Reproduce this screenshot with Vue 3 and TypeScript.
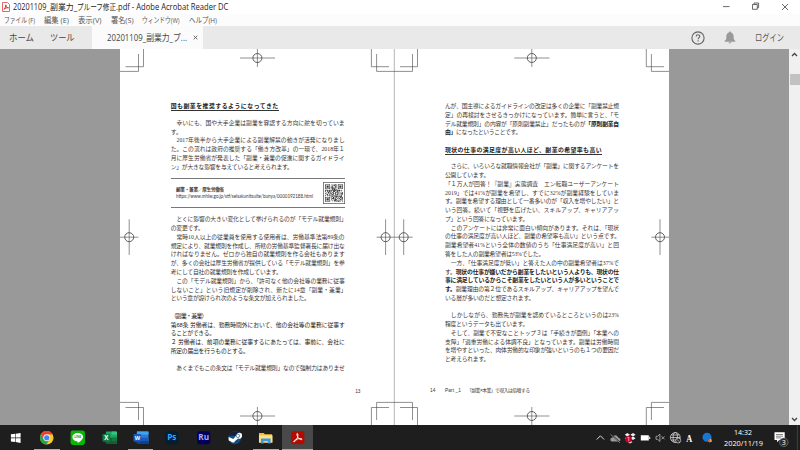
<script setup lang="ts">
import type { Directive } from 'vue'

type Line = { t: string; w?: number; g?: boolean }

// Fits a run of text to a measure: by tracking, or by horizontal scaling with `.scale`.
const vFit: Directive<HTMLElement, number | undefined> = {
  mounted(el, { value, modifiers }) {
    if (!value) return
    const natural = el.getBoundingClientRect().width
    if (modifiers.scale) {
      el.style.transform = `scaleX(${value / natural})`
      el.style.marginRight = `${value - natural}px`
    } else {
      const n = Array.from(el.textContent ?? '').length
      el.style.letterSpacing = `${(value - natural) / n}px`
    }
  },
}

const F = 174
const leftIntro: Line[] = [
  { t: '　幸いにも、国や大手企業は副業を容認する方向に舵を切っていま', w: F },
  { t: 'す。' },
  { t: '　2017年後半から大手企業による副業解禁の動きが活発になりまし', w: F },
  { t: 'た。この流れは政府の推奨する「働き方改革」の一環で、2018年１', w: F },
  { t: '月に厚生労働省が発表した「副業・兼業の促進に関するガイドライ', w: F },
  { t: 'ン」が大きな影響を与えていると考えられます。', w: 122 },
]
const leftBody: Line[] = [
  { t: '　とくに影響の大きい変化として挙げられるのが「モデル就業規則」', w: F + 2 },
  { t: 'の変更です。', w: 33 },
  { t: '　常時10人以上の従業員を使用する使用者は、労働基準法第89条の', w: F },
  { t: '規定により、就業規則を作成し、所轄の労働基準監督署長に届け出な', w: F },
  { t: 'ければなりません。ゼロから独自の就業規則を作る会社もあります', w: F },
  { t: 'が、多くの会社は厚生労働省が提供している「モデル就業規則」を参', w: F },
  { t: '考にして自社の就業規則を作成しています。', w: 111 },
  { t: '　この「モデル就業規則」から、「許可なく他の会社等の業務に従事', w: F },
  { t: 'しないこと」という旧規定が削除され、新たに14章「副業・兼業」', w: F + 2 },
  { t: 'という章が設けられ次のような条文が加えられました。', w: 139 },
  { t: '' },
  { t: '（副業・兼業）', w: 36, g: true },
  { t: '第68条 労働者は、勤務時間外において、他の会社等の業務に従事す', w: F, g: true },
  { t: 'ることができる。', w: 44, g: true },
  { t: '２ 労働者は、前項の業務に従事するにあたっては、事前に、会社に', w: F, g: true },
  { t: '所定の届出を行うものとする。', w: 78, g: true },
  { t: '' },
  { t: '　あくまでもこの条文は「モデル就業規則」なので強制力はありませ', w: F },
]
const rightIntro: Line[] = [
  { t: 'んが、国主導によるガイドラインの改定は多くの企業に「副業禁止規', w: F },
  { t: '定」の再検討をさせるきっかけになっています。簡単に言うと、「モ', w: F },
  { t: 'デル就業規則」の内容が「原則副業禁止」だったものが<b>「原則副業自</b>', w: F },
  { t: '<b>由」</b>になったということです。', w: 76 },
]
const rightBody: Line[] = [
  { t: '　さらに、いろいろな就職情報会社が「副業」に関するアンケートを', w: F },
  { t: '公開しています。', w: 44 },
  { t: '「１万人が回答！『副業』実態調査　エン転職ユーザーアンケート', w: F },
  { t: '2019」では41%が副業を希望し、すでに32%が副業経験をしていま', w: F },
  { t: 'す。副業を希望する理由として一番多いのが「収入を増やしたい」と', w: F },
  { t: 'いう回答。続いて「視野を広げたい、スキルアップ、キャリアアッ', w: F },
  { t: 'プ」という回答になっています。', w: 83 },
  { t: '　このアンケートには非常に面白い傾向があります。それは、「現状', w: F },
  { t: 'の仕事の満足度が高い人ほど、副業の希望率も高い」という点です。', w: F + 1 },
  { t: '副業希望者41%という全体の数値のうち「仕事満足度が高い」と回', w: F },
  { t: '答をした人の副業希望者は53%でした。', w: 99 },
  { t: '　一方、「仕事満足度が低い」と答えた人の中の副業希望者は37%で', w: F },
  { t: 'す。<b>現状の仕事が嫌いだから副業をしたいという人よりも、現状の仕</b>', w: F },
  { t: '<b>事に満足しているからこそ副業をしたいという人が多いということで</b>', w: F },
  { t: '<b>す。</b>副業理由の第２位であるスキルアップ、キャリアアップを望んで', w: F },
  { t: 'いる層が多いのだと想定されます。', w: 89 },
  { t: '' },
  { t: '　しかしながら、勤務先が副業を認めているところというのは23%', w: F },
  { t: '程度というデータも出ています。', w: 83 },
  { t: '　そして、副業で不安なことトップ３は「手続きが面倒」「本業への', w: F },
  { t: '支障」「過重労働による体調不良」となっています。副業は労働時間', w: F },
  { t: 'を増やすといった、肉体労働的な印象が強いというのも１つの要因だ', w: F },
  { t: 'と考えられます。', w: 44 },
]

const titleRuns = [
  { t: '20201109_', w: 36.5 },
  { t: '副業力_', w: 27.2 },
  { t: 'プルーフ修正', w: 39 },
  { t: '.pdf - Adobe Acrobat Reader DC', w: 112.3 },
]

const menus = [
  { t: 'ファイル (F)', w: 31 },
  { t: '編集 (E)', w: 25 },
  { t: '表示(V)', w: 23.5 },
  { t: '署名(S)', w: 22.5 },
  { t: 'ウィンドウ(W)', w: 37.5 },
  { t: 'ヘルプ(H)', w: 28 },
]

// Trim marks at each page corner.
const corners = [
  'M143.5 49V66.7H125.5M138.5 54V71.4H120',
  'M371.4 49V66.7H389M376.6 54V71.4H394',
  'M417.5 49V66.7H400M412.5 54V71.4H394',
  'M646.3 49V66.7H664M651.4 54V71.4H669',
  'M143.5 425V407.5H125.5M138.5 420V402.4H120',
  'M371.4 425V407.5H389M376.6 420V402.4H394',
  'M417.5 425V407.5H400M412.5 420V402.4H394',
  'M646.3 425V407.5H664M651.4 420V402.4H669',
]
const targets = [
  { x: 257.4, y: 58, l: 240, r: 275, t: 49, b: 67 },
  { x: 531.8, y: 58, l: 514.3, r: 549.5, t: 49, b: 67 },
  { x: 257.4, y: 416, l: 240, r: 275, t: 407, b: 425 },
  { x: 531.8, y: 416, l: 514.3, r: 549.5, t: 407, b: 425 },
  { x: 129.2, y: 237.2, l: 120, r: 138.5, t: 219.3, b: 255 },
  { x: 385.6, y: 237.2, l: 376.6, r: 394, t: 219.3, b: 255 },
  { x: 403.7, y: 237.2, l: 394, r: 412.7, t: 219.3, b: 255 },
  { x: 660, y: 237.2, l: 651.4, r: 669, t: 219.3, b: 255 },
]

const N = 25
let qr = ''
let seed = 77
for (let y = 0; y < N; y++) {
  for (let x = 0; x < N; x++) {
    seed = (seed * 1103515245 + 12345) % 2147483648
    const fx = x < 8 ? x : x > N - 9 ? N - 1 - x : -1
    const fy = y < 8 ? y : y > N - 9 ? N - 1 - y : -1
    let on = (seed >> 12) % 2 === 0
    if (fx >= 0 && fy >= 0 && !(x > 8 && y > 8)) {
      const d = Math.max(Math.abs(fx - 3), Math.abs(fy - 3))
      on = d === 3 || d < 2
    }
    if (on) qr += `M${x} ${y}h1v1h-1z`
  }
}
</script>

<template>
  <div class="screen">
    <header class="title">
      <svg class="pdf" viewBox="0 0 8 10"><path d="M.5.5h5l2 2v7h-7z" fill="#fff" stroke="#d44" stroke-width=".8"/><path d="M1.8 7.3C3.2 6.2 4 4.2 3.8 2.7M3.8 3C4 5 5.2 6 6.5 5.8M2 7.2C3.4 6 5 5.5 6.5 5.8" fill="none" stroke="#c22" stroke-width=".9"/></svg>
      <span class="title-text"><span v-for="r in titleRuns" :key="r.t"><span v-fit.scale="r.w" class="fit">{{ r.t }}</span></span></span>
      <svg class="winbtns" viewBox="720 0 80 14" fill="none" stroke="#444" stroke-width=".8"><path d="M723 6.6h6.5M752.5 4.5h4.8v4.800h-4.800zM754 4.400V3h4.600v4.700h-1.200M782 4l6 6M788 4l-6 6"/></svg>
    </header>
    <nav class="menu">
      <span v-for="m in menus" :key="m.t"><span v-fit.scale="m.w" class="fit">{{ m.t }}</span></span>
    </nav>
    <div class="toolbar">
      <div class="nav-tabs"><span><span v-fit.scale="25" class="fit">ホーム</span></span><span><span v-fit.scale="24.5" class="fit">ツール</span></span></div>
      <div class="tab"><span><span v-fit.scale="80" class="fit">20201109_副業力_プ...</span></span><svg viewBox="0 0 5 5"><path d="M.7.7l3.6 3.6M4.3.7L.7 4.3" stroke="#555" stroke-width=".9"/></svg></div>
      <div class="account">
        <svg class="help" viewBox="0 0 14 14"><circle cx="7" cy="7" r="6.1" fill="none" stroke="#626262" stroke-width="1.1"/><path d="M5.2 5.6C5.2 3.1 8.9 3.2 8.8 5.4C8.7 6.7 7.1 6.7 7.1 8.2M7.1 9.2v1.2" fill="none" stroke="#626262" stroke-width="1.1"/></svg>
        <svg class="bell" viewBox="0 0 12 13"><path d="M6 .6c.7 0 1 .5 1 1C9 2.1 9.7 4 9.7 6v2l1.6 2v.7H.7V10l1.6-2V6c0-2 .7-3.900 2.700-4.400 0-.5.3-1 1-1zM4.500 11.300h3c-.2 1.500-2.800 1.500-3 0z" fill="#999"/></svg>
        <span class="login"><span v-fit.scale="29" class="fit">ログイン</span></span>
      </div>
    </div>

    <main class="doc">
      <div class="spread">
        <article class="page left">
          <h2><span v-fit="108">国も副業を推奨するようになってきた</span></h2>
          <p v-for="(l, i) in leftIntro" :key="i"><span v-fit="l.w" v-html="l.t"></span></p>
          <aside class="ref">
            <div class="ref-text"><strong><span v-fit="48">副業・兼業／厚生労働省</span></strong><span class="url"><span v-fit.scale="137" class="fit">https://www.mhlw.go.jp/stf/seisakunitsuite/bunya/0000192188.html</span></span></div>
            <svg class="qr" viewBox="-3 -3 31 31"><rect x="-2.500" y="-2.500" width="30" height="30" fill="#fff" stroke="#555" stroke-width="1"/><path :d="qr" fill="#333"/></svg>
          </aside>
          <p v-for="(l, i) in leftBody" :key="'b' + i" :class="{ gothic: l.g }"><span v-fit="l.w" v-html="l.t"></span></p>
          <footer class="folio-left">13</footer>
        </article>
        <article class="page right">
          <p v-for="(l, i) in rightIntro" :key="i"><span v-fit="l.w" v-html="l.t"></span></p>
          <h2><span v-fit="157">現状の仕事の満足度が高い人ほど、副業の希望率も高い</span></h2>
          <p v-for="(l, i) in rightBody" :key="'b' + i"><span v-fit="l.w" v-html="l.t"></span></p>
          <footer class="folio-right"><span class="num">14</span><span class="part"><span v-fit="16">Part _1</span></span><span><span v-fit="62.5">「副業×本業」で収入は倍増する</span></span></footer>
        </article>
        <svg class="marks" viewBox="120 49 549 376" fill="none" stroke="#444" stroke-width=".6">
          <path d="M394.300 49V425" stroke="#b5b5b5" stroke-width="1"/>
          <path v-for="c in corners" :key="c" :d="c"/>
          <g v-for="(t, i) in targets" :key="i"><circle :cx="t.x" :cy="t.y" r="4.500" stroke-width=".85"/><path :d="`M${t.l} ${t.y}H${t.r}M${t.x} ${t.t}V${t.b}`"/></g>
        </svg>
      </div>
      <div class="scroll">
        <svg viewBox="0 0 11 11"><path d="M3 7l2.500-2.500L8 7" fill="none" stroke="#444" stroke-width="1.300"/></svg>
        <div class="thumb"></div>
        <svg class="down" viewBox="0 0 11 11"><path d="M3 4l2.500 2.500L8 4" fill="none" stroke="#444" stroke-width="1.300"/></svg>
      </div>
    </main>

    <footer class="taskbar">
      <div class="apps">
        <div class="app"><svg viewBox="0 0 16 16"><path d="M3 4.500l4.300-.6v3.900H3zM7.900 3.800L13 3v4.800H7.900zM3 8.400h4.300v4L3 11.800zM7.900 8.400H13v4.900l-5.100-.8z" fill="#fff"/></svg></div>
        <div class="app open"><svg viewBox="0 0 16 16"><circle cx="8" cy="8" r="7" fill="#f9c928"/><path d="M8 8L1.900 4.500A7 7 0 0 1 14.100 4.500H8z" fill="#e54335"/><path d="M1.900 4.500A7 7 0 0 0 7.500 15L11 9.700 8 11 5 9.700z" fill="#2ba24c"/><path d="M8 1a7 7 0 0 1 6.100 3.500H8A3.500 3.500 0 0 0 4.700 9.200L1.900 4.500A7 7 0 0 1 8 1z" fill="#e54335"/><circle cx="8" cy="8" r="3.500" fill="#eee"/><circle cx="8" cy="8" r="2.700" fill="#4285f4"/></svg></div>
        <div class="app"><svg viewBox="0 0 16 16"><rect x=".6" y=".6" width="14.800" height="14.800" rx="2.500" fill="#05b905"/><path d="M8 3c3.200 0 5.500 1.900 5.500 4.300 0 2.300-3.500 5.200-5.500 6.200.2-1 .1-1.600-.5-1.700-3-.2-5-2.100-5-4.500C2.500 4.900 4.800 3 8 3z" fill="#fff"/><text x="8" y="8.600" text-anchor="middle" font-size="3.300" font-weight="700" fill="#05a905">LINE</text></svg></div>
        <div class="app"><svg viewBox="0 0 16 16"><rect x="4" y="1.500" width="11.500" height="13" rx="1" fill="#21a366"/><path d="M4 8h11.500v5.500a1 1 0 0 1-1 1H5a1 1 0 0 1-1-1z" fill="#185c37"/><path d="M10 1.500h4.500a1 1 0 0 1 1 1V5H10z" fill="#33c481"/><path d="M10 8h5.500v3.300H10z" fill="#107c41"/><rect x=".5" y="4" width="8" height="8" rx=".8" fill="#107c41"/><text x="4.500" y="10.200" text-anchor="middle" font-size="6.500" font-weight="700" fill="#fff">X</text></svg></div>
        <div class="app open"><svg viewBox="0 0 16 16"><rect x="4" y="1.500" width="12" height="13" rx="1" fill="#2b7cd3"/><path d="M4 1.500h12v3.300H4z" fill="#41a5ee"/><path d="M4 8h12v3.300H4z" fill="#185abd"/><path d="M4 11.300h12v3.200H4z" fill="#103f91"/><rect x=".5" y="4" width="8" height="8" rx=".8" fill="#185abd"/><text x="4.500" y="10" text-anchor="middle" font-size="5.800" font-weight="700" fill="#fff">W</text></svg></div>
        <div class="app"><svg viewBox="0 0 16 16"><rect x="1.200" y="1.400" width="13.600" height="13.200" rx="2.400" fill="#001e36"/><text x="8" y="10.800" text-anchor="middle" font-size="8.500" font-weight="700" fill="#31a8ff">Ps</text></svg></div>
        <div class="app"><svg viewBox="0 0 16 16"><rect x="1.200" y="1.400" width="13.600" height="13.200" rx="2.400" fill="#00005b"/><text x="8" y="10.800" text-anchor="middle" font-size="8.500" font-weight="700" fill="#a9a4ff">Ru</text></svg></div>
        <div class="app"><svg viewBox="0 0 16 16"><circle cx="8" cy="8" r="6.700" fill="#174b78"/><path d="M1.700 6A6.700 6.700 0 0 1 14.300 6z" fill="#141f40"/><path d="M1.600 7.200l5 2.100 3-3.800a3 3 0 1 1 2 3.200l-3.300 2.600a2.300 2.300 0 0 1-4.200.6L1.800 10.800z" fill="#fff"/><circle cx="11.200" cy="6" r="1.800" fill="#fff" stroke="#174b78" stroke-width=".7"/></svg></div>
        <div class="app open"><svg viewBox="0 0 16 16"><path d="M1 3h5l1 1.300h7.500V13H1z" fill="#f0bd3e"/><path d="M1 5.500h14V13H1z" fill="#ffe08a"/><path d="M3 14V8.700h10V14h-2.700v-2.500H5.700V14z" fill="#3e98d3"/></svg></div>
        <div class="app active"><svg viewBox="0 0 16 16"><rect x="1.200" y="1.200" width="13.600" height="13.600" rx="2.200" fill="#b30b00"/><path d="M7.500 3.500c1 .2.700 2.600.2 4.200C6.800 10 5 12.500 4 12.200c-1-.5 1.300-2.200 3.700-2.900 2-.6 4.800-.7 4.700.3-.2 1-2.700 0-4-1.700C7.200 6.200 6.700 3.500 7.500 3.500z" fill="none" stroke="#fff" stroke-width="1"/></svg></div>
      </div>
      <svg class="tray" viewBox="590 425 130 25">
        <path d="M596.700 439.500l3.700-3.700 3.700 3.700" fill="none" stroke="#ddd"/>
        <path d="M612 441.500c-2.500-.5-2-3.800.3-3.700.8-3.600 5.200-3.300 6 0 2.700.2 2.800 3.700.5 3.700z" fill="#999"/><path d="M610.500 434l9.500 8.500" stroke="#1e1e1e" stroke-width="1.300"/><path d="M610.500 434.300l9.500 8.500" stroke="#aaa" stroke-width=".7"/>
        <path d="M627.300 433l2.700 1.700-2.700 1.700-2.600-1.700zM633 433l2.600 1.700-2.600 1.700-2.700-1.700zM627.300 436.600l2.700 1.700-2.700 1.700-2.600-1.700zM633 436.600l2.600 1.700-2.600 1.700-2.700-1.700zM630 440.500l2.500 1.400-2.500 1.600-2.500-1.600z" fill="#eee"/>
        <circle cx="628.500" cy="439.300" r="3.300" fill="#cf0028"/><text x="628.500" y="441.400" text-anchor="middle" font-size="5.500" fill="#fff">1</text>
        <path d="M640.800 435.200h8v5.400h-8zM649.200 436.700h1v2.400h-1z" fill="#fff"/>
        <path d="M656 436.300h1.700l2.200-2.200v7.400l-2.200-2.200H656zM661.500 436.300l3 3M664.500 436.300l-3 3" fill="none" stroke="#ccc" stroke-width=".7"/>
        <g fill="none" stroke="#ddd" stroke-width=".75"><circle cx="675.300" cy="437.500" r="4.900"/><ellipse cx="675.300" cy="437.500" rx="2.200" ry="4.900"/><path d="M670.500 437.500h9.600M671.300 435h8M671.300 440h8"/></g><circle cx="678.200" cy="440.500" r="2.500" fill="#222" stroke="#ddd" stroke-width=".7"/><path d="M676.500 439l3.400 3.200" stroke="#ddd" stroke-width=".6"/>
        <text class="ime" transform="translate(689.300 441.700) scale(.75 1)" text-anchor="middle" font-size="11" font-weight="700" fill="#fff">A</text>
        <circle cx="707" cy="437.300" r="4.500" fill="#1677d2"/><path d="M708 441l3-2.700 1 3.200-2.500 1z" fill="#f0a43c"/><circle cx="709" cy="441" r="1" fill="#e34b3c"/>
      </svg>
      <div class="clock"><span><span v-fit.scale="18" class="fit">14:32</span></span><span><span v-fit.scale="39" class="fit">2020/11/19</span></span></div>
      <svg class="note" viewBox="770 425 30 25"><path d="M774.500 432.200h10.200v7.800h-5.500l-2.200 2.200V440h-2.500z" fill="#fff"/><path d="M776 434.500h7M776 436.200h7M776 437.900h5" stroke="#333" stroke-width=".6"/><circle cx="783.800" cy="442.300" r="4.300" fill="#2b2b2b" stroke="#888" stroke-width=".6"/><text x="783.800" y="445" text-anchor="middle" font-size="7" fill="#fff">3</text><path d="M797.400 425v25" stroke="#555" stroke-width=".6"/></svg>
    </footer>
  </div>
</template>

<style>
body { margin: 0; overflow: hidden; }
</style>

<style scoped>
.screen { width: 800px; height: 450px; display: flex; flex-direction: column; overflow: hidden; background: #fff; font-family: "Open Sans", "Noto Sans CJK JP", sans-serif; color: #222; }
.screen span { white-space: nowrap; }
.fit { display: inline-block; transform-origin: 0 50%; white-space: pre; }
svg { display: block; flex: none; }
.title { height: 14px; flex: none; display: flex; align-items: center; padding-left: 2px; font-size: 8.3px; line-height: 14px; }
.pdf { width: 8px; height: 10px; margin-right: 3px; }
.title-text { flex: 1; display: flex; }
.winbtns { width: 80px; height: 14px; }
.menu { height: 12px; flex: none; display: flex; gap: 9px; padding-left: 4px; background: #fcfcfc; font-size: 7.5px; line-height: 13px; color: #555; }
.toolbar { height: 23px; flex: none; display: flex; background: #e9e9e9; font-size: 9px; line-height: 23px; color: #444; }
.nav-tabs { width: 83px; padding-left: 9px; display: flex; gap: 16px; }
.tab { width: 96px; padding-left: 15px; background: #fbfbfb; display: flex; align-items: center; gap: 6px; font-size: 8.6px; line-height: 24px; }
.tab svg { width: 5px; height: 5px; }
.account { margin-left: auto; display: flex; align-items: center; padding-right: 16px; }
.help { width: 14px; height: 14px; margin-right: 19px; }
.bell { width: 12px; height: 13px; margin-right: 19px; }
.login { font-size: 9.5px; color: #555; }
.doc { height: 376px; flex: none; display: flex; background: #999; padding-left: 120px; }
.spread { position: relative; width: 549px; height: 376px; display: flex; background: #fff; }
.marks { position: absolute; inset: 0; width: 549px; height: 376px; }
.page { box-sizing: border-box; height: 376px; font: 5.8px/8.77px "Liberation Serif", "Noto Sans CJK JP", serif; color: #3b3634; }
.left { width: 274px; padding: 52px 0 0 50.7px; }
.right { width: 275px; padding: 53px 0 0 51px; }
.page p { margin: 0; height: 8.77px; }
.page :deep(b) { font-weight: 700; color: #222; }
.gothic { font-family: "Liberation Sans", "Noto Sans CJK JP", sans-serif; color: #222; }
.page h2 { margin: 0; width: max-content; height: 9px; border-bottom: 1.4px solid #333; font: 700 5.9px/9px "Noto Sans CJK JP", sans-serif; color: #222; }
.left h2 { margin-bottom: 7.8px; }
.right h2 { margin: 8.2px 0 7.1px; }
.ref { box-sizing: border-box; width: 174px; height: 30.5px; margin: 6.4px 0 7.1px; border-top: 1px solid #777; border-bottom: 1px solid #777; display: flex; align-items: center; justify-content: space-between; padding-left: 5.3px; }
.ref-text { display: flex; flex-direction: column; font: 4.6px/7px "Open Sans", "Noto Sans CJK JP", sans-serif; }
.ref-text strong { font-weight: 700; }
.url { font-family: Lato, sans-serif; font-size: 5px; }
.qr { width: 22px; height: 22px; }
.folio-left { padding: 14.6px 0 0 184.500px; font: 4.8px/8px "Liberation Sans", sans-serif; }
.folio-right { display: flex; margin: 23.400px 0 0 -15px; font: 4.8px/8px "Liberation Sans", "Noto Sans CJK JP", sans-serif; }
.num { width: 15px; }
.part { width: 22px; }
.scroll { width: 11px; margin-left: auto; display: flex; flex-direction: column; background: #f0f0f0; }
.scroll svg { width: 11px; height: 11px; }
.thumb { height: 11px; margin: 14px 0 0 1px; background: #c2c2c2; }
.scroll .down { margin-top: auto; }
.taskbar { height: 25px; flex: none; display: flex; background: #1e1e1e; color: #fff; }
.apps { width: 590px; display: flex; }
.app { box-sizing: border-box; width: 31.3px; height: 25px; display: flex; justify-content: center; align-items: center; position: relative; }
.app svg { width: 15.500px; height: 15.500px; }
.active { background: #494949; }
.open::after, .active::after { content: ""; position: absolute; left: 3px; right: 3px; bottom: 0; height: 1.500px; background: #76b9ed; }
.active::after { left: 0; right: 0; }
.tray { width: 130px; height: 25px; }
.ime { font-family: "Liberation Serif", serif; }
.clock { width: 50px; padding-top: 2px; box-sizing: border-box; display: flex; flex-direction: column; align-items: center; font-size: 7.300px; line-height: 11px; margin-left: -2px; margin-right: 2px; }
.note { width: 30px; height: 25px; }
</style>
